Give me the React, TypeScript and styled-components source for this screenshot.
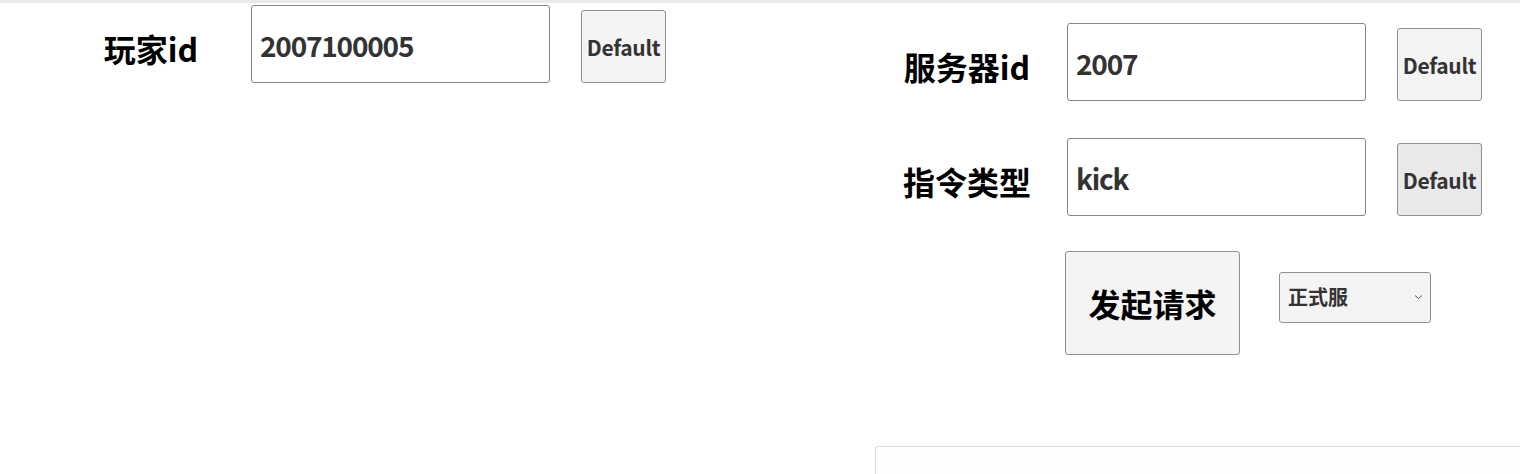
import React from "react";
import styled, { createGlobalStyle } from "styled-components";

const GlobalStyle = createGlobalStyle`
  html, body {
    margin: 0;
    padding: 0;
    background: #ffffff;
    font-family: "Noto Sans CJK SC", "Noto Sans", sans-serif;
    overflow: hidden;
  }
  * { box-sizing: border-box; }
`;

const TopBar = styled.div`
  height: 3px;
  background: #ebebeb;
`;

const Page = styled.div`
  display: flex;
  align-items: flex-start;
  height: 471px;
  overflow: hidden;
`;

const LeftPanel = styled.section`
  width: 867px;
  flex: none;
  padding: 2px 0 0 51px;
`;

const RightPanel = styled.section`
  flex: 1;
  min-width: 0;
  padding-top: 20px;
  display: flex;
  flex-direction: column;
`;

const Row = styled.div<{ $gap?: number }>`
  display: flex;
  align-items: center;
  margin-bottom: ${(p) => p.$gap ?? 0}px;
`;

const Label = styled.label`
  width: 200px;
  flex: none;
  text-align: center;
  font-size: 32px;
  font-weight: 700;
  color: #000;
  padding-top: 7px;
  line-height: 1;
`;

const TextInput = styled.input`
  width: 299px;
  height: 78px;
  flex: none;
  border: 1px solid #858585;
  border-radius: 3px;
  padding: 2px 0 0 8px;
  font-family: "Noto Sans CJK SC", "Noto Sans", sans-serif;
  font-size: 28px;
  letter-spacing: -1.2px;
  font-weight: 700;
  color: #333;
  background: #fff;
  outline: none;
`;

const DefaultButton = styled.button<{ $hover?: boolean }>`
  width: 85px;
  height: 73px;
  margin: 5px 0 0 31px;
  align-self: flex-end;
  padding: 0;
  border: 1px solid #8f8f8f;
  border-radius: 3px;
  background: ${(p) => (p.$hover ? "#e9e9e9" : "#f4f4f4")};
  font-family: "Noto Sans CJK SC", "Noto Sans", sans-serif;
  font-size: 21px;
  letter-spacing: -0.3px;
  font-weight: 700;
  color: #333;
  white-space: nowrap;
  cursor: pointer;
`;

const ActionRow = styled.div`
  display: flex;
  align-items: flex-start;
  padding-left: 198px;
`;

const SubmitButton = styled.button`
  width: 175px;
  height: 104px;
  flex: none;
  padding: 0;
  border: 1px solid #8f8f8f;
  border-radius: 3px;
  background: #f4f4f4;
  font-family: "Noto Sans CJK SC", "Noto Sans", sans-serif;
  font-size: 32px;
  font-weight: 700;
  color: #000;
  cursor: pointer;
`;

const SelectBox = styled.div`
  position: relative;
  width: 152px;
  height: 51px;
  margin: 21px 0 0 39px;
  flex: none;
`;

const Select = styled.select`
  width: 100%;
  height: 100%;
  appearance: none;
  border: 1px solid #8f8f8f;
  border-radius: 3px;
  background: #f4f4f4;
  padding: 0 0 2px 8px;
  font-family: "Noto Sans CJK SC", "Noto Sans", sans-serif;
  font-size: 20px;
  font-weight: 700;
  color: #333;
  outline: none;
`;

const Chevron = styled.svg`
  position: absolute;
  right: 8px;
  top: 22px;
  pointer-events: none;
`;

const ResultBox = styled.div`
  margin: 91px 0 0 8px;
  height: 28px;
  border: 1px solid #dcdcdc;
  border-right: none;
  border-bottom: none;
  border-radius: 3px 0 0 0;
  background: #fefefe;
`;

export default function App() {
  return (
    <>
      <GlobalStyle />
      <TopBar />
      <Page>
        <LeftPanel>
          <Row>
            <Label>玩家id</Label>
            <TextInput defaultValue="2007100005" />
            <DefaultButton>Default</DefaultButton>
          </Row>
        </LeftPanel>
        <RightPanel>
          <Row $gap={37}>
            <Label>服务器id</Label>
            <TextInput defaultValue="2007" />
            <DefaultButton>Default</DefaultButton>
          </Row>
          <Row $gap={35}>
            <Label>指令类型</Label>
            <TextInput defaultValue="kick" />
            <DefaultButton $hover>Default</DefaultButton>
          </Row>
          <ActionRow>
            <SubmitButton>发起请求</SubmitButton>
            <SelectBox>
              <Select defaultValue="prod">
                <option value="prod">正式服</option>
                <option value="test">测试服</option>
              </Select>
              <Chevron width="9" height="6" viewBox="0 0 9 6">
                <path d="M1 1.5 L4.5 4.5 L8 1.5" fill="none" stroke="#555" strokeWidth="1" />
              </Chevron>
            </SelectBox>
          </ActionRow>
          <ResultBox />
        </RightPanel>
      </Page>
    </>
  );
}
